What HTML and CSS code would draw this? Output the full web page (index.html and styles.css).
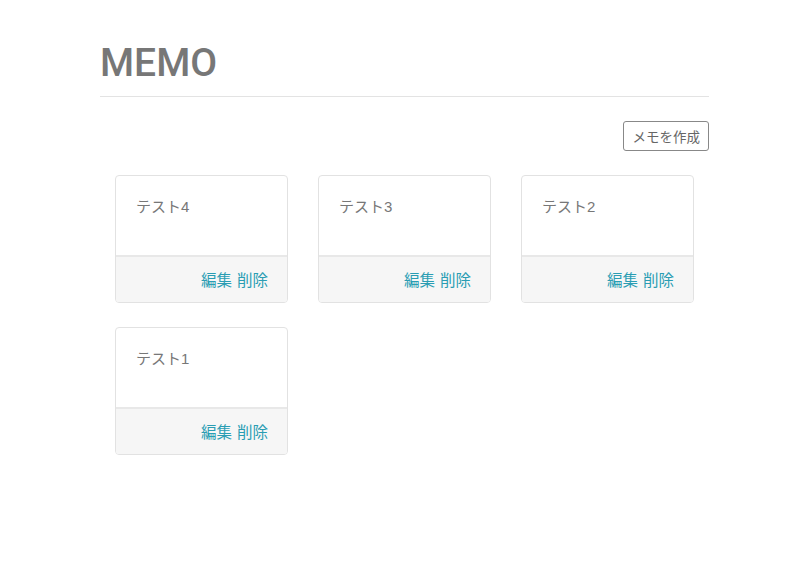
FILE: index.html
```html
<!DOCTYPE html>
<html lang="ja">
<head>
<meta charset="utf-8">
<title>MEMO</title>
<link rel="stylesheet" href="styles.css">
</head>
<body>
<div class="container">
  <h1 class="title">MEMO</h1>
  <div class="toolbar">
    <a class="btn" href="#">メモを作成</a>
  </div>
  <div class="grid">
    <div class="col"><div class="card"><div class="card-body">テスト4</div><div class="card-footer"><a href="#">編集</a> <a href="#">削除</a></div></div></div>
    <div class="col"><div class="card"><div class="card-body">テスト3</div><div class="card-footer"><a href="#">編集</a> <a href="#">削除</a></div></div></div>
    <div class="col"><div class="card"><div class="card-body">テスト2</div><div class="card-footer"><a href="#">編集</a> <a href="#">削除</a></div></div></div>
    <div class="col"><div class="card"><div class="card-body">テスト1</div><div class="card-footer"><a href="#">編集</a> <a href="#">削除</a></div></div></div>
  </div>
</div>
</body>
</html>
```

FILE: styles.css
```css
html, body {
  margin: 0;
  padding: 0;
  background: #fff;
}
body {
  font-family: "Liberation Sans", "Noto Sans CJK JP", sans-serif;
  color: #666;
}
.container {
  width: 609px;
  margin-left: 100px;
  padding-top: 41px;
}
.title {
  margin: 0;
  font-family: Roboto, "Liberation Sans", sans-serif;
  font-size: 39px;
  line-height: 45px;
  font-weight: 500;
  color: #777;
  padding-bottom: 10px;
  border-bottom: 1px solid #e3e3e3;
  letter-spacing: 0;
}
.toolbar {
  display: flex;
  justify-content: flex-end;
  margin-top: 24px;
}
.btn {
  display: flex;
  align-items: center;
  height: 28px;
  padding: 0 8px 0 9px;
  border: 1px solid #888;
  border-radius: 3px;
  font-size: 13.5px;
  color: #666;
  text-decoration: none;
}
.grid {
  display: grid;
  grid-template-columns: repeat(3, 1fr);
  row-gap: 24px;
  margin-top: 24px;
}
.col {
  padding: 0 15px;
}
.card {
  border: 1px solid #e2e2e2;
  border-radius: 4px;
  overflow: hidden;
}
.card-body {
  height: 79px;
  box-sizing: border-box;
  padding: 20px 20px 0;
  font-size: 15px;
  line-height: 22px;
  color: #777;
}
.card-footer {
  height: 47px;
  box-sizing: border-box;
  border-top: 2px solid #e8e8e8;
  background: #f6f6f6;
  display: flex;
  align-items: center;
  justify-content: flex-end;
  padding: 0 19px 2px 0;
  gap: 5px;
  font-size: 15.5px;
}
.card-footer a {
  color: #2a9db3;
  text-decoration: none;
}
```
